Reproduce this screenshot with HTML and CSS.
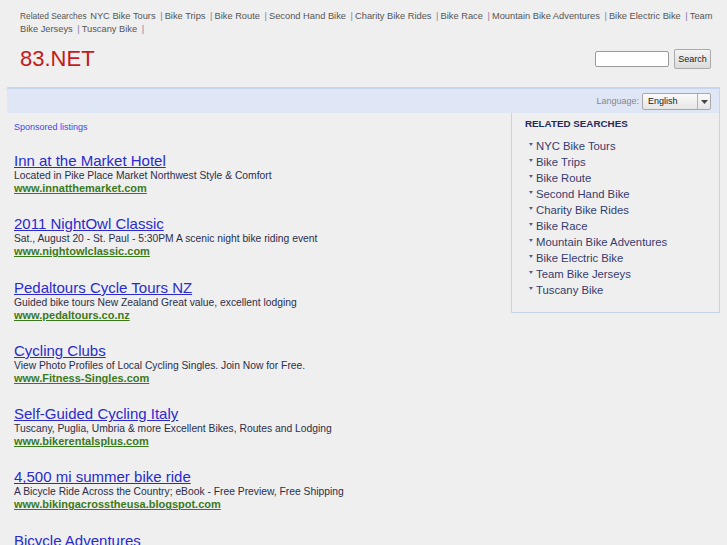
FILE: index.html
```html
<!DOCTYPE html>
<html>
<head>
<meta charset="utf-8">
<link rel="stylesheet" href="styles.css">
</head>
<body>
<div class="top">
  <div class="related"><span class="rel-label">Related Searches</span> <a href="#">NYC Bike Tours</a> <span class="sep">|</span><a href="#">Bike Trips</a> <span class="sep">|</span><a href="#">Bike Route</a> <span class="sep">|</span><a href="#">Second Hand Bike</a> <span class="sep">|</span><a href="#">Charity Bike Rides</a> <span class="sep">|</span><a href="#">Bike Race</a> <span class="sep">|</span><a href="#">Mountain Bike Adventures</a> <span class="sep">|</span><a href="#">Bike Electric Bike</a> <span class="sep">|</span><a href="#">Team Bike Jerseys</a> <span class="sep">|</span><a href="#">Tuscany Bike</a> <span class="sep">|</span></div>
  <div class="brand-row">
    <div class="logo">83.NET</div>
    <form class="search">
      <input type="text" class="search-input">
      <button type="button" class="search-btn">Search</button>
    </form>
  </div>
</div>
<div class="wrap">
  <div class="bar">
    <span class="lang-label">Language:</span>
    <div class="select"><span class="select-val">English</span><span class="select-arrow"><svg width="7" height="4" viewBox="0 0 7 4"><path d="M0 0h7L3.5 4z" fill="#444"/></svg></span></div>
  </div>
  <div class="main">
    <div class="ads">
      <div class="sponsored">Sponsored listings</div>
      <div class="ad"><a class="ad-title" href="#">Inn at the Market Hotel</a><div class="ad-desc">Located in Pike Place Market Northwest Style &amp; Comfort</div><a class="ad-url" href="#">www.innatthemarket.com</a></div>
      <div class="ad"><a class="ad-title" href="#">2011 NightOwl Classic</a><div class="ad-desc">Sat., August 20 - St. Paul - 5:30PM A scenic night bike riding event</div><a class="ad-url" href="#">www.nightowlclassic.com</a></div>
      <div class="ad"><a class="ad-title" href="#">Pedaltours Cycle Tours NZ</a><div class="ad-desc">Guided bike tours New Zealand Great value, excellent lodging</div><a class="ad-url" href="#">www.pedaltours.co.nz</a></div>
      <div class="ad"><a class="ad-title" href="#">Cycling Clubs</a><div class="ad-desc">View Photo Profiles of Local Cycling Singles. Join Now for Free.</div><a class="ad-url" href="#">www.Fitness-Singles.com</a></div>
      <div class="ad"><a class="ad-title" href="#">Self-Guided Cycling Italy</a><div class="ad-desc">Tuscany, Puglia, Umbria &amp; more Excellent Bikes, Routes and Lodging</div><a class="ad-url" href="#">www.bikerentalsplus.com</a></div>
      <div class="ad"><a class="ad-title" href="#">4,500 mi summer bike ride</a><div class="ad-desc">A Bicycle Ride Across the Country; eBook - Free Preview, Free Shipping</div><a class="ad-url" href="#">www.bikingacrosstheusa.blogspot.com</a></div>
      <div class="ad"><a class="ad-title" href="#">Bicycle Adventures</a><div class="ad-desc">Guided bicycle tours worldwide</div><a class="ad-url" href="#">www.bicycleadventures.com</a></div>
    </div>
    <div class="side">
      <div class="side-head">RELATED SEARCHES</div>
      <ul class="side-list">
        <li><a href="#">NYC Bike Tours</a></li>
        <li><a href="#">Bike Trips</a></li>
        <li><a href="#">Bike Route</a></li>
        <li><a href="#">Second Hand Bike</a></li>
        <li><a href="#">Charity Bike Rides</a></li>
        <li><a href="#">Bike Race</a></li>
        <li><a href="#">Mountain Bike Adventures</a></li>
        <li><a href="#">Bike Electric Bike</a></li>
        <li><a href="#">Team Bike Jerseys</a></li>
        <li><a href="#">Tuscany Bike</a></li>
      </ul>
    </div>
  </div>
</div>
</body>
</html>
```
FILE: styles.css
```css
html, body { margin: 0; padding: 0; }
body {
  background: #efefef;
  font-family: "Liberation Sans", Arial, sans-serif;
  color: #333;
  overflow: hidden;
  height: 545px;
}
a { text-decoration: none; }
.top { padding: 10px 0 0 20px; }
.related {
  width: 695px;
  font-size: 9.3px;
  line-height: 12.5px;
  color: #555;
}
.rel-label { font-size: 8.4px; color: #555; margin-right: 1px; }
.related a { color: #555; }
.sep { color: #8a7aa0; margin-right: 2px; margin-left: 2px; }
.brand-row {
  display: flex;
  justify-content: space-between;
  align-items: flex-start;
  padding-top: 11px;
  height: 41px;
}
.logo {
  font-size: 22px;
  line-height: 26px;
  color: #c41a1a;
}
.search { display: flex; gap: 5px; margin: 3px 16px 0 0; align-items: center; }
.search-input {
  width: 70px;
  height: 12px;
  border: 1px solid #9a9a9a;
  border-radius: 2px;
  background: #fff;
  padding: 1px;
  margin: 0;
}
.search-btn {
  font-family: "Liberation Sans", Arial, sans-serif;
  font-size: 9px;
  height: 20px;
  width: 37px;
  padding: 0;
  border: 1px solid #aaa;
  border-radius: 2px;
  background: linear-gradient(#f4f4f4, #dcdcdc);
  color: #222;
  margin: 0;
}
.wrap { margin: 0 7px; }
.bar {
  height: 24px;
  background: #dfe6f5;
  border-top: 2px solid #c8d5ee;
  border-right: 1px solid #c8d5ee;
  display: flex;
  justify-content: flex-end;
  align-items: center;
  padding-right: 8px;
}
.lang-label { font-size: 9px; color: #888; margin-right: 3px; }
.select {
  display: flex;
  width: 67px;
  height: 15px;
  border: 1px solid #a8a8a8;
  border-radius: 2px;
  background: linear-gradient(#fafafa, #e6e6e6);
  font-size: 9px;
  color: #222;
  margin-top: 1px;
}
.select-val { flex: 1; padding-left: 5px; line-height: 15px; }
.select-arrow {
  width: 12px;
  border-left: 1px solid #b0b0b0;
  display: flex;
  align-items: center;
  justify-content: center;
}
.main { display: flex; justify-content: space-between; align-items: flex-start; }
.ads { padding: 8px 0 0 7px; }
.sponsored { font-size: 9px; color: #4646ee; line-height: 12px; margin-bottom: 20px; }
.ad { display: flex; flex-direction: column; align-items: flex-start; height: 63.3px; }
.ad-title {
  font-size: 15px;
  line-height: 16px;
  color: #2a2ad0;
  text-decoration: underline;
}
.ad-desc { font-size: 10.3px; line-height: 13px; color: #2b2e4a; }
.ad-url {
  font-size: 11px;
  line-height: 13px;
  font-weight: bold;
  color: #3b7a1c;
  text-decoration: underline;
}
.side {
  width: 207px;
  height: 199px;
  border-left: 1px solid #c8d3ea;
  border-right: 1px solid #c8d3ea;
  border-bottom: 1px solid #c8d3ea;
  box-sizing: content-box;
}
.side-head {
  font-size: 9.8px;
  font-weight: bold;
  color: #232a5e;
  padding: 5px 0 0 13px;
  line-height: 12px;
}
.side-list {
  list-style: none;
  margin: 8px 0 0 0;
  padding: 0 0 0 17px;
}
.side-list li {
  font-size: 11.3px;
  line-height: 16px;
  padding-left: 7px;
  position: relative;
}
.side-list li::before {
  content: "";
  position: absolute;
  left: 0;
  top: 5px;
  width: 0;
  height: 0;
  border-left: 2px solid transparent;
  border-right: 2px solid transparent;
  border-top: 3px solid #5a5f8a;
}
.side-list a { color: #363b6e; }
```
